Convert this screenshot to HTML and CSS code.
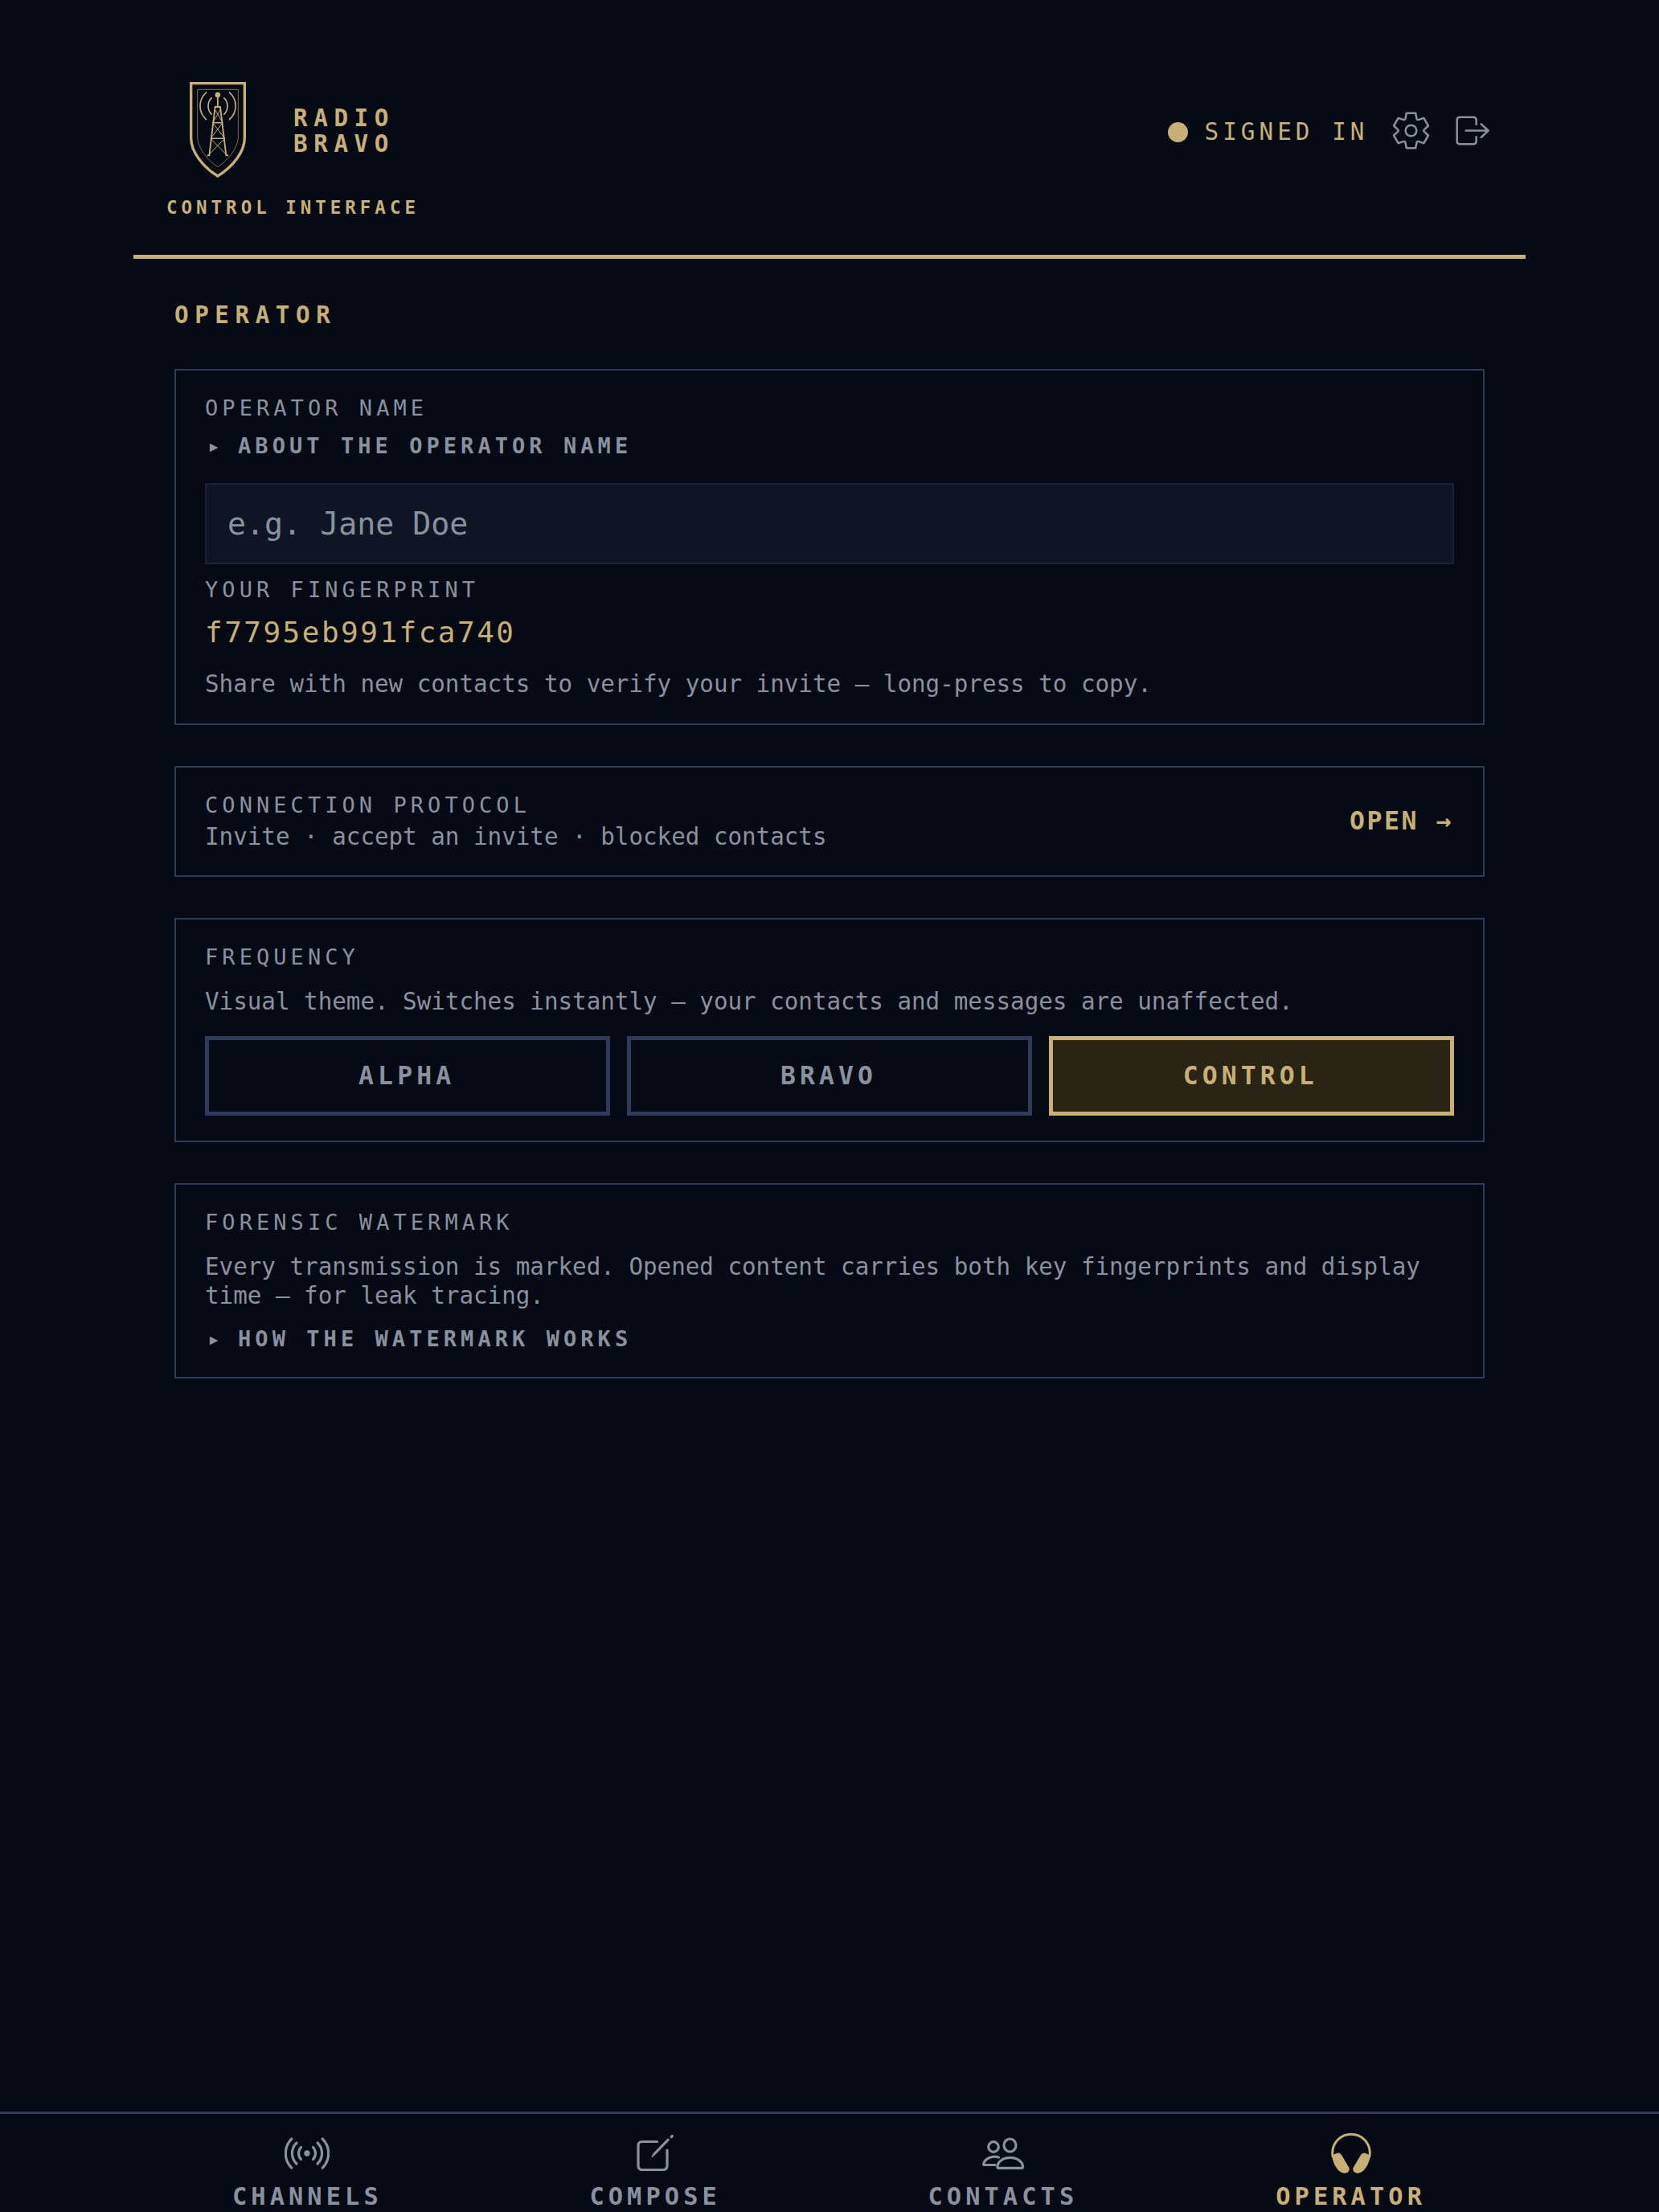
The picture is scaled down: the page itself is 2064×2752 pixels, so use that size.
FILE: index.html
```html
<!DOCTYPE html>
<html lang="en">
<head>
    <meta charset="UTF-8">
    <meta name="viewport" content="width=device-width, initial-scale=1.0">
    <title>Radio Bravo</title>
    <link rel="stylesheet" href="styles.css">
</head>
<body>

    <header class="header">
        <div class="brand">
            <div class="brand-row">
                <!-- Shield with radio tower -->
                <svg class="brand-logo" viewBox="0 0 216 363" fill="none" stroke="currentColor">
                    <path stroke-width="10" d="M8 8H208V212C208 262 165 320 107.500 354C51 320 8 262 8 212Z"/>
                    <path stroke-width="3" opacity="0.6" d="M32 31H184V207C184 245 151 292 107.500 320C65 292 32 245 32 207Z"/>
                    <circle cx="107.500" cy="51" r="10" fill="currentColor" stroke="none"/>
                    <path stroke-width="5.500" d="M107.500 55V95M68 277H76L98 96H117L139 277H147"/>
                    <path stroke-width="4.500" d="M89 155H126M81 214H134"/>
                    <path stroke-width="3" d="M96 104L126 155M119 104L89 155M89 155L134 214M126 155L81 214M81 214L143 277M134 214L72 277"/>
                    <path stroke-width="5" d="M86 61A43.600 43.600 0 0 0 86 125M130 61A43.600 43.600 0 0 1 130 125M66 41A67 67 0 0 0 66 144M150 41A67 67 0 0 1 150 144"/>
                </svg>
                <div class="brand-name">RADIO<br>BRAVO</div>
            </div>
            <div class="brand-sub">CONTROL INTERFACE</div>
        </div>

        <div class="status">
            <span class="status-dot"></span>
            <span class="status-text">SIGNED IN</span>
            <button class="icon-button" aria-label="Settings">
                <svg viewBox="-76.500 -76.500 153 153" fill="none" stroke="currentColor" stroke-width="7.500" stroke-linejoin="round">
                    <path d="M-21 -45L-17 -65H17L21 -45Q22.500 -39 28.500 -40.700L47.500 -47L64.500 -18L49.500 -4.300Q45 0 49.500 4.300L64.500 18L47.500 47L28.500 40.700Q22.500 39 21 45L17 65H-17L-21 45Q-22.500 39 -28.500 40.700L-47.500 47L-64.500 18L-49.500 4.300Q-45 0 -49.500 -4.300L-64.500 -18L-47.500 -47L-28.500 -40.700Q-22.500 -39 -21 -45Z"/>
                    <circle r="20.500"/>
                </svg>
            </button>
            <button class="icon-button" aria-label="Sign out">
                <svg viewBox="0 0 153 153" fill="none" stroke="currentColor" stroke-width="7.500" stroke-linecap="round" stroke-linejoin="round">
                    <path stroke-linecap="butt" d="M92 56V37Q92 26.500 81 26.500H31Q20 26.500 20 37V116Q20 126.500 31 126.500H81Q92 126.500 92 116V97"/>
                    <path d="M53 76.500H136M110 52L137 76.500L110 102"/>
                </svg>
            </button>
        </div>
    </header>

    <main class="main">
        <h1 class="page-title">OPERATOR</h1>

        <section class="card">
            <label class="label" for="operator-name">OPERATOR NAME</label>
            <details class="about-name">
                <summary>ABOUT THE OPERATOR NAME</summary>
            </details>
            <input class="name-input" id="operator-name" type="text" placeholder="e.g. Jane Doe">
            <div class="label fingerprint-label">YOUR FINGERPRINT</div>
            <div class="fingerprint">f7795eb991fca740</div>
            <p class="text share-text">Share with new contacts to verify your invite — long-press to copy.</p>
        </section>

        <section class="card protocol">
            <div>
                <div class="label">CONNECTION PROTOCOL</div>
                <p class="text protocol-text">Invite · accept an invite · blocked contacts</p>
            </div>
            <a class="open-link">OPEN →</a>
        </section>

        <section class="card">
            <div class="label">FREQUENCY</div>
            <p class="text">Visual theme. Switches instantly — your contacts and messages are unaffected.</p>
            <div class="themes">
                <button class="theme">ALPHA</button>
                <button class="theme">BRAVO</button>
                <button class="theme active">CONTROL</button>
            </div>
        </section>

        <section class="card">
            <div class="label">FORENSIC WATERMARK</div>
            <p class="text">Every transmission is marked. Opened content carries both key fingerprints and display time — for leak tracing.</p>
            <details class="about-watermark">
                <summary>HOW THE WATERMARK WORKS</summary>
            </details>
        </section>
    </main>

    <nav class="nav">
        <div class="nav-inner">
            <a class="nav-item">
                <svg viewBox="-28 -28 56 56" fill="none" stroke="currentColor" stroke-width="3.200" stroke-linecap="round">
                    <circle r="3.700" fill="currentColor" stroke="none"/>
                    <path d="M-7.500 -7.500A10.900 10.900 0 0 0 -7.500 7.500M7.500 -7.500A10.900 10.900 0 0 1 7.500 7.500"/>
                    <path d="M-13 -13A18 18 0 0 0 -13 13M13 -13A18 18 0 0 1 13 13"/>
                    <path d="M-19.300 -18A25.600 25.600 0 0 0 -19.300 18M19.300 -18A25.600 25.600 0 0 1 19.300 18"/>
                </svg>
                <span>CHANNELS</span>
            </a>
            <a class="nav-item">
                <svg viewBox="0 0 56 56" fill="none" stroke="currentColor" stroke-width="3.200" stroke-linecap="round">
                    <path d="M30.500 13.500H12Q7 13.500 7 18.500V43.500Q7 48.500 12 48.500H38Q43 48.500 43 43.500V24"/>
                    <path d="M27 28.800L44.200 11.200M48.200 7.600L49.300 6.500"/>
                    <path stroke-width="2" d="M24.500 32L26.500 29"/>
                </svg>
                <span>COMPOSE</span>
            </a>
            <a class="nav-item">
                <svg viewBox="0 0 56 56" fill="none" stroke="currentColor" stroke-width="3.200" stroke-linecap="round" stroke-linejoin="round">
                    <ellipse cx="36.500" cy="18" rx="7.500" ry="8"/>
                    <circle cx="16" cy="20" r="6.300"/>
                    <path d="M21 45.500C20.500 39 27.500 33.300 36.700 33.300C46 33.300 53 39 52.500 45.500Q52.300 46.300 51 46.300H22.500Q21.200 46.300 21 45.500Z"/>
                    <path d="M22.500 33C14.500 30 4.500 35 3.700 41.500Q3.700 42.500 5 42.500H18"/>
                </svg>
                <span>CONTACTS</span>
            </a>
            <a class="nav-item active">
                <svg viewBox="0 0 56 56" fill="none" stroke="currentColor" stroke-width="3">
                    <path d="M5.500 33C4.900 31 4.700 29.500 4.700 27.500A23.300 23.300 0 0 1 51.300 27.500C51.300 29.500 51.100 31 50.500 33"/>
                    <path fill="currentColor" stroke="none" d="M5 30.500C7 29.500 8 28.800 10 27.800Q14 26.500 16 30L25.500 46Q27 51 21 52.800C12 53 5.500 42 4 30Z"/>
                    <path fill="currentColor" stroke="none" d="M51 30.500C49 29.500 48 28.800 46 27.800Q42 26.500 40 30L30.500 46Q29 51 35 52.800C44 53 50.500 42 52 30Z"/>
                </svg>
                <span>OPERATOR</span>
            </a>
        </div>
    </nav>

</body>
</html>
```
FILE: styles.css
```css
* {
    box-sizing: border-box;
}
body {
    display: flex;
    flex-direction: column;
    min-height: 100vh;
    margin: 0;
    background-color: #060a14;
    color: #8a919e;
    font-family: "DejaVu Sans Mono", monospace;
}
button, input {
    font-family: inherit;
    color: inherit;
    border-radius: 0;
}
svg {
    display: block;
}

/* Header */
.header {
    display: flex;
    justify-content: space-between;
    align-items: flex-start;
    width: 1732px;
    margin: 0 auto;
    padding: 101px 41px 45px;
    border-bottom: 5px solid #c8b075;
    color: #c8b075;
}
.brand {
    display: flex;
    flex-direction: column;
    align-items: center;
}
.brand-row {
    display: flex;
    align-items: center;
    gap: 58px;
    padding-right: 3px;
}
.brand-logo {
    width: 72px;
    height: 121px;
}
.brand-name {
    padding-top: 2px;
    font-size: 29.25px;
    font-weight: bold;
    line-height: 32px;
    letter-spacing: 7.56px;
}
.brand-sub {
    margin-top: 23px;
    font-size: 22.5px;
    font-weight: bold;
    line-height: 27px;
    letter-spacing: 4.98px;
}
.status {
    display: flex;
    align-items: center;
    height: 126px;
}
.status-dot {
    width: 25px;
    height: 25px;
    margin-right: 20px;
    border-radius: 50%;
    background-color: #c8b075;
}
.status-text {
    margin-right: 27.5px;
    font-size: 29.25px;
    letter-spacing: 5.06px;
}
.icon-button {
    width: 51px;
    height: 51px;
    margin: 0 0 3px;
    padding: 0;
    border: 0;
    background: none;
    color: #8a919e;
}
.icon-button + .icon-button {
    margin-left: 25px;
}

/* Content */
.main {
    width: 1732px;
    margin: 0 auto;
    padding: 52px 51px 0;
}
.page-title {
    margin: 0 0 49px;
    color: #c8b075;
    font-size: 29.25px;
    line-height: 36px;
    letter-spacing: 7.56px;
}
.card {
    margin-bottom: 51px;
    padding: 31px 36px;
    border: 2px solid #2f3a5a;
}
.label {
    display: block;
    font-size: 27px;
    line-height: 32px;
    letter-spacing: 5.06px;
}
.text {
    margin: 21px 0 0;
    font-size: 29.25px;
    line-height: 36px;
    letter-spacing: -0.03px;
}
summary {
    display: flex;
    font-size: 27px;
    font-weight: bold;
    line-height: 32px;
    letter-spacing: 5.06px;
    list-style: none;
}
summary::before {
    content: "▸";
    width: 38px;
    padding-left: 3px;
}
.about-name {
    margin: 15px 0 30px;
}
.about-watermark {
    margin-top: 20px;
}
.name-input {
    display: block;
    width: 100%;
    height: 101px;
    padding: 0 26px;
    border: 2px solid #1a2138;
    background-color: #0f1524;
    font-size: 38.25px;
}
.name-input::placeholder {
    color: #8a919e;
    opacity: 1;
}
.fingerprint-label {
    margin-top: 16px;
}
.fingerprint {
    margin-top: 16px;
    color: #c8b075;
    font-size: 36px;
    line-height: 42px;
    letter-spacing: 2.48px;
}
.share-text {
    margin-top: 25px;
}
.protocol {
    display: flex;
    justify-content: space-between;
    align-items: center;
}
.protocol-text {
    margin-top: 6px;
    line-height: 34px;
}
.open-link {
    padding: 0 1px 2px 0;
    color: #c8b075;
    font-size: 31.5px;
    font-weight: bold;
    letter-spacing: 2.52px;
}
.themes {
    display: flex;
    gap: 20.5px;
    margin-top: 25px;
}
.theme {
    flex: 1;
    height: 99px;
    padding: 0 2px 2px 0;
    border: 5px solid #2f3a5a;
    background: none;
    font-size: 31.5px;
    font-weight: bold;
    letter-spacing: 5.06px;
}
.theme.active {
    border-color: #c8b075;
    background-color: #2a2414;
    color: #c8b075;
}

/* Bottom navigation */
.nav {
    height: 125px;
    margin-top: auto;
    border-top: 3px solid #2f3a5a;
}
.nav-inner {
    display: flex;
    width: 1732px;
    margin: 0 auto;
    padding: 21px 1px 0 0;
}
.nav-item {
    flex: 1;
    display: flex;
    flex-direction: column;
    align-items: center;
    gap: 8px;
    font-size: 30.375px;
    font-weight: bold;
    line-height: 36px;
    letter-spacing: 5.06px;
}
.nav-item svg {
    width: 56px;
    height: 56px;
}
.nav-item.active {
    color: #c8b075;
}
```
